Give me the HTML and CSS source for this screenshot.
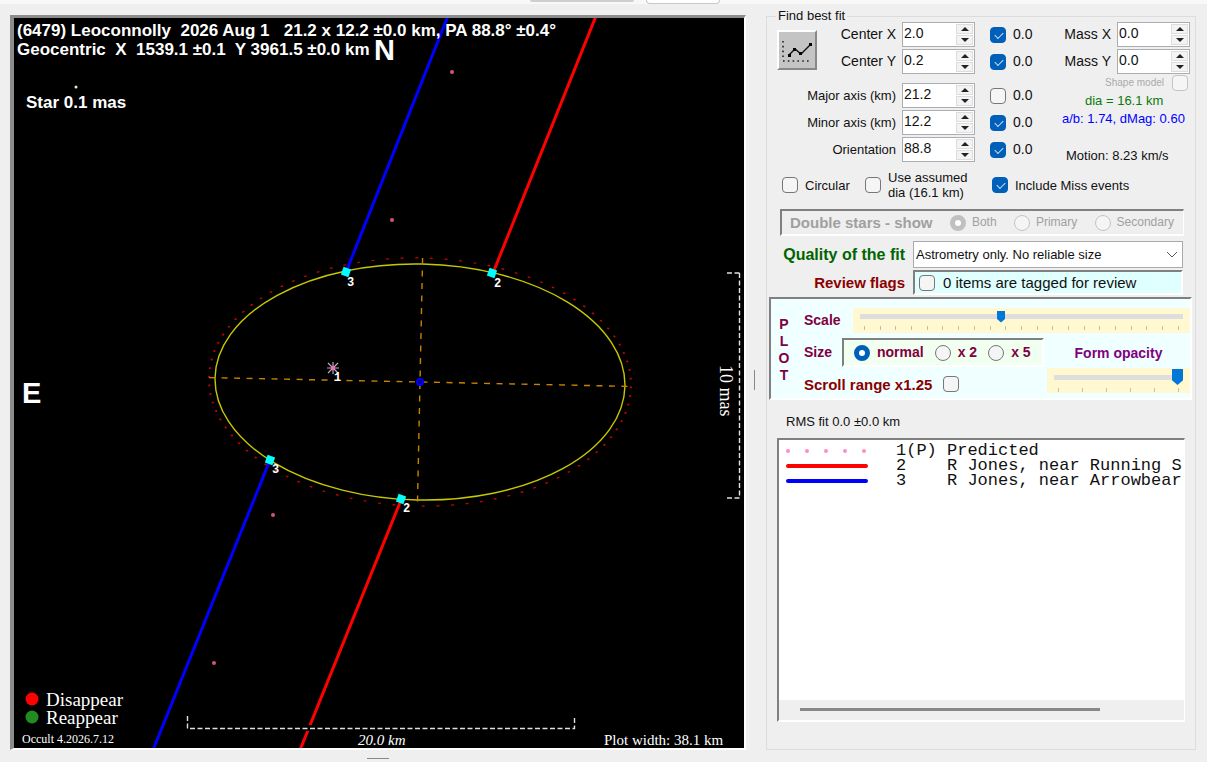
FILE: index.html
```html
<!DOCTYPE html>
<html lang="en">

  <head>
    <meta charset="UTF-8">
    <meta name="viewport" content="width=device-width, initial-scale=1.0">
    <title>Occult - Find best fit</title>
    <link rel="stylesheet" href="styles.css">
  </head>

  <body>
    <div class="toolbar">
      <span class="tool-grey"></span>
      <span class="tool-white"></span>
    </div>

    <main>
      <div class="plot">
        <svg viewBox="0 0 730 730" role="img" aria-label="Occultation plot">
          <!-- chords -->
          <g class="chord">
            <path stroke="#0000ff" d="M434-2 332 254M256 442 139 732" />
            <path stroke="#ff0000" d="M582-2 479 255M387 482 286 732" />
          </g>
          <rect x="280" y="707" width="30" height="6" />

          <!-- fitted ellipse, error ellipse and axes -->
          <g transform="translate(406 364) rotate(1.2)" fill="none">
            <circle r="211" pathLength="360" transform="scale(1 0.588)" stroke="#d00000" stroke-width="2" stroke-dasharray="0.8 3.2" />
            <ellipse rx="205" ry="118" stroke="#c8c800" stroke-width="1.4" />
            <path d="M-211 0H211M0-124V124" stroke="#c88200" stroke-width="1.4" stroke-dasharray="6 6.5" />
            <circle r="3" stroke="#0000ff" stroke-width="2" fill="#000080" />
          </g>

          <g fill="#00ffff">
            <rect x="-4" y="-4" width="8" height="8" transform="translate(332 254) rotate(20)" />
            <rect x="-4" y="-4" width="8" height="8" transform="translate(478 255) rotate(20)" />
            <rect x="-4" y="-4" width="8" height="8" transform="translate(256 442) rotate(20)" />
            <rect x="-4" y="-4" width="8" height="8" transform="translate(387 481) rotate(20)" />
          </g>

          <!-- predicted path -->
          <g fill="#d0508c">
            <circle cx="438" cy="54" r="2" />
            <circle cx="378" cy="202" r="2" />
            <circle cx="259" cy="497" r="2" />
            <circle cx="200" cy="645" r="2" />
          </g>
          <path d="M319 344v12M313 350h12M314 345l10 10M324 345l-10 10" stroke="#c0a8c0" stroke-width="1.2" />
          <circle cx="319" cy="350" r="2" fill="#ff69b4" />
          <circle cx="62" cy="69" r="1.5" fill="#f0e8c8" />

          <g class="chord-no">
            <text x="333" y="268">3</text>
            <text x="480" y="269">2</text>
            <text x="258" y="455">3</text>
            <text x="389" y="494">2</text>
            <text x="320" y="363">1</text>
          </g>

          <!-- scale bars -->
          <g fill="none" stroke="#e0e0e0" stroke-width="1.4" stroke-dasharray="5 2.5">
            <path d="M725.500 255H713M725.500 255V480H713" />
            <path d="M173.500 698V710.500H560.500V698" />
          </g>

          <g class="title">
            <text x="3" y="18">(6479) Leoconnolly  2026 Aug 1   21.2 x 12.2 ±0.0 km, PA 88.8° ±0.4°</text>
            <text x="3" y="37">Geocentric  X  1539.1 ±0.1  Y 3961.5 ±0.0 km</text>
            <text x="12" y="90">Star 0.1 mas</text>
          </g>
          <g class="compass">
            <text x="360" y="42">N</text>
            <text x="8" y="385">E</text>
          </g>

          <circle cx="18" cy="681" r="6.500" fill="#ff0000" />
          <circle cx="18" cy="699" r="6.500" fill="#228b22" />
          <g class="note">
            <text class="legend-text" x="32" y="688">Disappear</text>
            <text class="legend-text" x="32" y="706">Reappear</text>
            <text class="version" x="8" y="725">Occult 4.2026.7.12</text>
            <text class="km" x="344" y="727">20.0 km</text>
            <text x="590" y="727">Plot width: 38.1 km</text>
            <text class="mas" transform="translate(706 347) rotate(90)">10 mas</text>
          </g>
        </svg>
      </div>

      <div class="splitter"></div>

      <fieldset class="panel">
        <legend>Find best fit</legend>

        <div class="fit">
          <div class="params">
            <div class="centre">
              <button class="plot-btn" type="button" aria-label="Plot fit">
                <svg viewBox="0 0 36 36" width="36" height="36">
                  <path d="M4 9v18M4 29h28" stroke="#222" stroke-width="1.6" stroke-dasharray="1.6 3.2" fill="none" />
                  <path d="M10 23l6-6 6 5 10-10" stroke="#111" stroke-width="1.4" fill="none" />
                  <path d="M9 22h3v3H9zM14 16h3v3h-3zM20 20h3v3h-3zM30 11h3v3h-3z" />
                </svg>
              </button>
              <div class="rows">
                <div class="row">
                  <label for="cx">Center X</label>
                  <span class="spin"><input id="cx" type="text" value="2.0"><span class="arrows"><button type="button" aria-label="Up"></button><button type="button" class="down" aria-label="Down"></button></span></span>
                  <label class="fix"><input type="checkbox" checked>0.0</label>
                </div>
                <div class="row">
                  <label for="cy">Center Y</label>
                  <span class="spin"><input id="cy" type="text" value="0.2"><span class="arrows"><button type="button" aria-label="Up"></button><button type="button" class="down" aria-label="Down"></button></span></span>
                  <label class="fix"><input type="checkbox" checked>0.0</label>
                </div>
              </div>
            </div>
            <div class="rows axes">
              <div class="row">
                <label for="major">Major axis (km)</label>
                <span class="spin"><input id="major" type="text" value="21.2"><span class="arrows"><button type="button" aria-label="Up"></button><button type="button" class="down" aria-label="Down"></button></span></span>
                <label class="fix"><input type="checkbox">0.0</label>
              </div>
              <div class="row">
                <label for="minor">Minor axis (km)</label>
                <span class="spin"><input id="minor" type="text" value="12.2"><span class="arrows"><button type="button" aria-label="Up"></button><button type="button" class="down" aria-label="Down"></button></span></span>
                <label class="fix"><input type="checkbox" checked>0.0</label>
              </div>
              <div class="row">
                <label for="orient">Orientation</label>
                <span class="spin"><input id="orient" type="text" value="88.8"><span class="arrows"><button type="button" aria-label="Up"></button><button type="button" class="down" aria-label="Down"></button></span></span>
                <label class="fix"><input type="checkbox" checked>0.0</label>
              </div>
            </div>
          </div>

          <div class="mass">
            <div class="rows">
              <div class="row">
                <label for="mx">Mass X</label>
                <span class="spin"><input id="mx" type="text" value="0.0"><span class="arrows"><button type="button" aria-label="Up"></button><button type="button" class="down" aria-label="Down"></button></span></span>
              </div>
              <div class="row">
                <label for="my">Mass Y</label>
                <span class="spin"><input id="my" type="text" value="0.0"><span class="arrows"><button type="button" aria-label="Up"></button><button type="button" class="down" aria-label="Down"></button></span></span>
              </div>
            </div>
            <label class="shape">Shape model <input type="checkbox" disabled></label>
            <div class="dia">dia = 16.1 km</div>
            <div class="ratio">a/b: 1.74, dMag: 0.60</div>
            <div class="motion">Motion: 8.23 km/s</div>
          </div>
        </div>

        <div class="options">
          <label class="circular"><input type="checkbox">Circular</label>
          <label class="assumed"><input type="checkbox"><span>Use assumed<br>dia (16.1 km)</span></label>
          <label><input type="checkbox" checked>Include Miss events</label>
        </div>

        <div class="double sunken">
          <b>Double stars - show</b>
          <label><input type="radio" name="double" checked disabled>Both</label>
          <label><input type="radio" name="double" disabled>Primary</label>
          <label><input type="radio" name="double" disabled>Secondary</label>
        </div>

        <div class="quality">
          <label class="q-label" for="quality">Quality of the fit</label>
          <div class="select">
            <select id="quality">
              <option>Astrometry only. No reliable size</option>
            </select>
            <svg viewBox="0 0 12 8" width="12" height="8"><path d="M1 1l5 5 5-5" fill="none" stroke="#555" /></svg>
          </div>
          <span class="r-label">Review flags</span>
          <label class="review sunken"><input type="checkbox">0 items are tagged for review</label>
        </div>

        <div class="plot-opts sunken">
          <div class="plot-word"><span>P</span><span>L</span><span>O</span><span>T</span></div>
          <div class="plot-body">
            <div class="scale-row">
              <label for="scale">Scale</label>
              <div class="track">
                <input id="scale" type="range" min="0" max="1000" value="435">
                <div class="ticks"><i></i><i></i><i></i><i></i><i></i><i></i><i></i><i></i><i></i><i></i><i></i><i></i><i></i><i></i><i></i><i></i><i></i><i></i><i></i><i></i><i></i></div>
              </div>
            </div>
            <div class="lower">
              <div class="lower-left">
                <div class="size-row">
                  <span>Size</span>
                  <div class="sizes sunken">
                    <label><input type="radio" name="size" checked>normal</label>
                    <label><input type="radio" name="size">x 2</label>
                    <label><input type="radio" name="size">x 5</label>
                  </div>
                </div>
                <label class="scroll" for="scroll">Scroll range x1.25 <input id="scroll" type="checkbox"></label>
              </div>
              <div class="opacity">
                <label for="opacity">Form opacity</label>
                <div class="track">
                  <input id="opacity" class="big" type="range" min="0" max="100" value="100">
                  <div class="ticks"><i></i><i></i><i></i><i></i><i></i><i></i></div>
                </div>
              </div>
            </div>
          </div>
        </div>

        <div class="rms">RMS fit 0.0 ±0.0 km</div>

        <div class="list sunken">
          <div class="items">
            <div class="item"><span class="key dots"><i></i><i></i><i></i><i></i><i></i></span><pre>1(P) Predicted</pre></div>
            <div class="item"><span class="key red"></span><pre>2    R Jones, near Running S</pre></div>
            <div class="item"><span class="key blue"></span><pre>3    R Jones, near Arrowbear</pre></div>
          </div>
          <div class="hscroll"><div class="hthumb"></div></div>
        </div>
      </fieldset>
    </main>

    <div class="grip"></div>
  </body>

</html>
```
FILE: styles.css
```css
* {
  box-sizing: border-box;
}

body {
  margin: 0;
  min-height: 100vh;
  background: #efefef;
  color: #111;
  font-family: "Liberation Sans", Arial, sans-serif;
  font-size: 13px;
  line-height: 15px;
}

/* bottom edge of the toolbar above */
.toolbar {
  display: flex;
  align-items: flex-start;
  gap: 12px;
  height: 4px;
  padding-left: 530px;
  background: #f8f8f8;
}

.tool-grey {
  width: 104px;
  height: 2px;
  background: #cfcfcf;
  border-radius: 0 0 4px 4px;
}

.tool-white {
  width: 74px;
  height: 4px;
  background: #fff;
  border: 1px solid #c8c8c8;
  border-top: 0;
  border-radius: 0 0 4px 4px;
}

main {
  display: grid;
  grid-template-columns: 1fr 20px 430px;
  padding: 6px 11px 0 10px;
}

.plot {
  align-self: start;
  margin-top: 5px;
  border-style: solid;
  border-width: 3px 2px 2px 4px;
  border-color: #8c8c8c #fff #fff #8c8c8c;
  background: #000;
}

.plot svg {
  display: block;
  width: 100%;
  font-family: "Liberation Sans", Arial, sans-serif;
  fill: #000;
}

.plot text {
  fill: #fff;
  white-space: pre;
}

.chord {
  stroke-width: 3;
}

.title {
  font-size: 17px;
  font-weight: bold;
}

.compass {
  font-size: 29px;
  font-weight: bold;
}

.chord-no {
  font-size: 12px;
  font-weight: bold;
  font-family: "Liberation Mono", monospace;
}

.note {
  font-family: "Liberation Serif", serif;
  font-size: 15px;
}

.legend-text {
  font-size: 19px;
}

.version {
  font-size: 12px;
}

.km {
  font-style: italic;
}

.mas {
  font-size: 18px;
}

.splitter {
  align-self: center;
  width: 1px;
  height: 20px;
  margin-left: 8px;
  background: #888;
}

.grip {
  width: 22px;
  height: 1px;
  margin: 8px 0 0 367px;
  background: #888;
}

.panel {
  display: flex;
  flex-direction: column;
  min-width: 0;
  margin: 0;
  padding: 0 3px 27px 2px;
  border: 1px solid #dcdcdc;
}

legend {
  margin-left: 7px;
  padding: 0 2px;
  line-height: 12px;
}

label {
  white-space: nowrap;
}

.sunken {
  border: 2px solid;
  border-color: #808080 #fff #fff #808080;
}

/* check boxes and radios */
input[type="checkbox"],
input[type="radio"] {
  appearance: none;
  flex: none;
  width: 16px;
  height: 16px;
  margin: 0;
  border: 1px solid #777;
  border-radius: 4px;
  background: #f5f5f5;
}

input[type="radio"] {
  border-radius: 50%;
}

input[type="checkbox"]:checked {
  border-color: #005fb8;
  background: #005fb8;
}

input[type="checkbox"]:checked::after {
  content: "";
  display: block;
  width: 7px;
  height: 4px;
  margin: 4px;
  border: solid #cfe0f2;
  border-width: 0 0 1px 1px;
  transform: rotate(-45deg);
}

input[type="radio"]:checked {
  border: 5px solid #005fb8;
  background: #fff;
}

input:disabled {
  border-color: #c4c4c4;
}

input[type="radio"]:checked:disabled {
  border-color: #c0c0c0;
}

/* fit parameters */
.fit {
  display: flex;
  justify-content: space-between;
  padding: 0 2px 0 8px;
  font-size: 14px;
}

.params {
  display: flex;
  flex-direction: column;
  gap: 9px;
  width: 256px;
}

.centre {
  display: flex;
  justify-content: space-between;
}

.plot-btn {
  width: 40px;
  height: 40px;
  margin-top: 8px;
  padding: 0;
  border: 2px solid;
  border-color: #fff #888 #888 #fff;
  background: #c4c4c4;
}

.plot-btn svg {
  display: block;
}

.rows {
  display: flex;
  flex-direction: column;
  gap: 2px;
}

.row {
  display: flex;
  align-items: center;
  justify-content: flex-end;
  gap: 6px;
}

.axes label:first-child {
  font-size: 13px;
}

.spin {
  display: flex;
  width: 73px;
  height: 25px;
  border: 1px solid #abadb3;
  background: #fff;
}

.spin input {
  flex: 1;
  min-width: 0;
  padding: 0 0 3px 1px;
  border: 0;
  background: none;
  color: #111;
  font: inherit;
}

.arrows {
  display: flex;
  flex-direction: column;
  gap: 1px;
  width: 19px;
  padding: 1px;
}

.arrows button {
  flex: 1;
  padding: 0;
  border: 1px solid #ddd;
  background: #f3f3f3;
}

.arrows button::before {
  content: "";
  display: block;
  width: 0;
  margin: 0 auto;
  border: 4px solid transparent;
  border-top: 0;
  border-bottom: 4px solid #222;
}

.arrows .down::before {
  border-top: 4px solid #222;
  border-bottom: 0;
}

.fix {
  display: flex;
  align-items: center;
  gap: 7px;
  margin-left: 9px;
  width: 43px;
}

.mass {
  display: flex;
  flex-direction: column;
  width: 130px;
}

.shape {
  display: flex;
  align-items: center;
  justify-content: flex-end;
  gap: 8px;
  height: 17px;
  padding-right: 2px;
  color: #aaa;
  font-size: 10px;
}

.shape input {
  align-self: flex-end;
}

.dia {
  margin-top: 2px;
  padding-left: 25px;
  color: #0a7a0a;
  font-size: 13px;
}

.ratio {
  margin-top: 3px;
  padding-left: 2px;
  color: #00f;
  font-size: 13px;
  white-space: nowrap;
}

.motion {
  margin-top: 22px;
  padding-left: 6px;
  font-size: 13px;
}

.options {
  display: flex;
  align-items: center;
  margin-top: 7px;
  padding-left: 13px;
}

.options label {
  display: flex;
  align-items: center;
  gap: 7px;
}

.options .circular {
  width: 83px;
}

.options .assumed {
  width: 127px;
}

.double {
  display: flex;
  align-items: center;
  height: 27px;
  margin: 9px 8px 0 11px;
  padding: 0 9px 0 8px;
  justify-content: space-between;
  border-right-width: 1px;
  color: #a0a0a0;
  font-size: 12px;
}

.double b {
  font-size: 15px;
}

.double label {
  display: flex;
  align-items: center;
  gap: 6px;
}

.quality {
  display: grid;
  grid-template-columns: 1fr 270px;
  gap: 2px 8px;
  align-items: center;
  margin: 5px 9px 0 10px;
  text-align: right;
  font-weight: bold;
}

.q-label {
  color: #006400;
  font-size: 16px;
}

.r-label {
  color: #8b0000;
  font-size: 15px;
}

.select {
  display: flex;
  align-items: center;
  height: 27px;
  border: 1px solid #aaa;
  background: #fff;
}

.select select {
  flex: 1;
  appearance: none;
  height: 25px;
  padding: 0 0 0 2px;
  border: 0;
  background: none;
  color: #111;
  font: 13px "Liberation Sans", Arial, sans-serif;
}

.select svg {
  margin-right: 4px;
}

.review {
  display: flex;
  align-items: center;
  gap: 8px;
  height: 25px;
  padding-left: 4px;
  background: #e0ffff;
  font-size: 15px;
  font-weight: normal;
}

/* plot options */
.plot-opts {
  display: flex;
  margin-top: 2px;
  height: 103px;
  background: #f0ffff;
  color: #800040;
  font-size: 14px;
  font-weight: bold;
}

.plot-word {
  display: flex;
  flex-direction: column;
  width: 26px;
  padding-top: 17px;
  text-align: center;
  line-height: 17px;
}

.plot-body {
  flex: 1;
  margin-left: 7px;
}

.scale-row {
  display: flex;
  align-items: center;
  margin-top: 9px;
}

.scale-row label {
  width: 49px;
}

.track {
  flex: 1;
  height: 25px;
  padding: 2px 7px;
  background: #fff8d0;
}

.ticks {
  display: flex;
  justify-content: space-between;
  margin-top: 3px;
  padding: 0 4px;
}

.ticks i {
  width: 1px;
  height: 4px;
  background: #c0c0b0;
}

input[type="range"] {
  appearance: none;
  display: block;
  width: 100%;
  height: 13px;
  margin: 0;
  background: linear-gradient(#dedede, #dedede) center / 100% 5px no-repeat;
}

input[type="range"]::-webkit-slider-thumb {
  appearance: none;
  width: 8px;
  height: 12px;
  background: #0078d7;
  clip-path: polygon(0 0, 100% 0, 100% 70%, 50% 100%, 0 70%);
}

input.big {
  height: 16px;
}

input.big::-webkit-slider-thumb {
  width: 11px;
  height: 16px;
}

.lower {
  display: flex;
  justify-content: space-between;
}

.lower-left {
  width: 240px;
}

.size-row {
  display: flex;
  align-items: center;
  justify-content: space-between;
  margin-top: 5px;
}

.sizes {
  display: flex;
  align-items: center;
  gap: 11px;
  width: 202px;
  height: 29px;
  padding-left: 10px;
  background: #f0fff0;
}

.sizes label {
  display: flex;
  align-items: center;
  gap: 7px;
}

.scroll {
  display: flex;
  align-items: center;
  gap: 11px;
  margin-top: 9px;
  color: #8b0000;
  font-size: 15px;
}

.opacity {
  width: 143px;
  margin-top: 13px;
  color: #800080;
}

.opacity label {
  display: block;
  text-align: center;
  margin-bottom: 7px;
}

.opacity .track {
  padding-top: 1px;
}

.rms {
  margin: 14px 0 9px 17px;
}

.list {
  display: flex;
  flex: 1;
  flex-direction: column;
  margin: 0 7px 0 8px;
  border-right-width: 1px;
  background: #fff;
}

.items {
  flex: 1;
  overflow: hidden;
  padding: 3px 0 0 7px;
}

.item {
  display: flex;
  align-items: center;
  height: 15px;
}

.item pre {
  margin: 0 0 0 28px;
  font: 17px/15px "Liberation Mono", monospace;
}

.key {
  flex: none;
  width: 82px;
  height: 4px;
  border-radius: 2px;
}

.red {
  background: #f00;
}

.blue {
  background: #00f;
}

.dots {
  display: flex;
  gap: 15px;
}

.dots i {
  width: 4px;
  height: 4px;
  border-radius: 50%;
  background: #ff8cc6;
}

.hscroll {
  height: 20px;
  padding: 8px 84px 0 21px;
  background: #efefef;
}

.hthumb {
  height: 3px;
  background: #888;
}
```
